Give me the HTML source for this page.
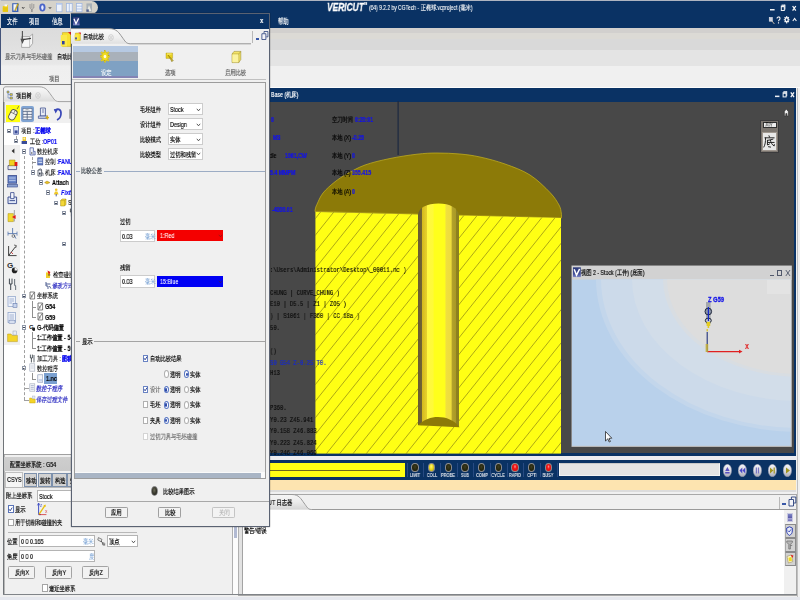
<!DOCTYPE html>
<html><head><meta charset="utf-8">
<style>
*{box-sizing:border-box;margin:0;padding:0}
html,body{width:800px;height:600px;overflow:hidden;background:#f0f0f0;font-family:"Liberation Sans",sans-serif;font-size:8px;color:#000}
.a{position:absolute}
.t{will-change:transform;-webkit-text-stroke:.18px currentColor;position:absolute;white-space:nowrap;line-height:7px;font-size:7px;transform:scaleX(.75);transform-origin:0 0}
.m{font-family:"Liberation Mono",monospace;font-size:7.4px;color:#0c0c0c}
.w{color:#fff}
.b{color:#1010f0;font-weight:bold}
.navy{background:#0a3264}
</style></head><body>
<!-- ===== top title + menu ===== -->
<div class="a navy" style="left:0;top:0;width:800px;height:27.6px"></div>
<div class="a" style="left:0;top:0;width:800px;height:1.2px;background:#aeb4c0"></div>
<div class="a" style="left:0;top:0;width:1.2px;height:28px;background:#c8ccd4"></div>
<div id="qat" class="a" style="left:0;top:1.2px;width:98px;height:12.6px;background:#d6d3cb;border-radius:0 7px 7px 0"></div>
<svg class="a" style="left:0;top:0" width="100" height="15" viewBox="0 0 100 15"><path d="M2.8 6 H5 L5.8 5 H8 V11.8 H2.8 Z" fill="#f0d020"/><path d="M2.8 7.4 H8 V11.8 H2.8 Z" fill="#e8c810"/><path d="M4.6 4.4 H7.2 V6.4 H4.6 Z" fill="#f8f8f0"/><rect x="12.2" y="3.2" width="6.2" height="8.8" fill="#3c64b8"/><rect x="13.4" y="4.2" width="3.6" height="6.4" fill="#f4f4f4"/><path d="M17.6 3.4 L18.6 4 L15.8 10.4 L14.8 10.8 L14.9 9.8 Z" fill="#e8c820" stroke="#604800" stroke-width=".3"/><path d="M22 7 L23.2 8.6 L24.4 7" fill="none" stroke="#303030" stroke-width=".8"/><path d="M30 4 V8 L31.6 9 V12 M33.8 4 V8 L32.2 9 V12 M31.9 3.4 V8" fill="none" stroke="#8a8a8a" stroke-width=".8"/><ellipse cx="42.4" cy="7.6" rx="3.1" ry="4" fill="#4a64c8"/><ellipse cx="42.4" cy="7.6" rx="1.2" ry="2.4" fill="#e8ecff"/><path d="M48.8 7 L50 8.6 L51.2 7" fill="none" stroke="#303030" stroke-width=".8"/><g fill="#eef3fc" stroke="#9ab2e0" stroke-width=".7"><rect x="56.4" y="3.4" width="5.6" height="8.4"/><rect x="66.4" y="3.4" width="5.8" height="8.4"/><rect x="76.4" y="3.4" width="5.6" height="8.4"/></g><path d="M69.3 3.4 V11.8 M76.4 6.2 H82 M76.4 9 H82" stroke="#9ab2e0" stroke-width=".7"/><rect x="56.4" y="3.4" width="5.6" height="1.4" fill="#b8ccf0"/><rect x="86.4" y="3.4" width="5.6" height="8.4" fill="#a8b0b8"/><path d="M87 11 L89 5 L91.4 11 Z" fill="#e8e8e0"/><rect x="86.4" y="9.4" width="2.4" height="2.4" fill="#506090"/></svg>
<div class="t w" style="left:6.9px;top:17.6px;font-size:7.8px;line-height:7.8px;transform:scaleX(.66)">文件</div>
<div class="t w" style="left:29.4px;top:17.6px;font-size:7.8px;line-height:7.8px;transform:scaleX(.66)">项目</div>
<div class="t w" style="left:52px;top:17.6px;font-size:7.8px;line-height:7.8px;transform:scaleX(.66)">信息</div>
<div class="t w" style="left:277.5px;top:17.6px;font-size:7.8px;line-height:7.8px;transform:scaleX(.66)">帮助</div>
<div class="t w" style="left:327px;top:2.2px;font-size:10.5px;line-height:10.5px;font-weight:bold;font-style:italic;transform:scaleX(.8);-webkit-text-stroke:.3px #fff">VERICUT</div>
<div class="t w" style="left:363.5px;top:2.6px;font-size:3px;line-height:3px">TM</div>
<div class="t w" style="left:369px;top:4.6px;font-size:6.6px;line-height:6.6px;-webkit-text-stroke:.1px #fff">(64) 9.2.2 by CGTech - 正椭球.vcproject (毫米)</div>
<svg class="a" style="left:764px;top:0" width="36" height="28" viewBox="0 0 36 28">
<rect x="6" y="9" width="4.6" height="1.5" fill="#eef0f4"/>
<rect x="17.6" y="4.6" width="3.4" height="1.2" fill="#eef0f4"/><rect x="16.8" y="5.6" width="4" height="5.4" fill="#eef0f4"/><rect x="17.8" y="7.2" width="2" height="2.8" fill="#0a3264"/><rect x="20.4" y="4.6" width="1" height="5" fill="#eef0f4"/>
<path d="M28.6 6 L31.8 10.6 M31.8 6 L28.6 10.6" stroke="#f4f4f6" stroke-width="1.3"/>
<rect x="5.2" y="17.4" width="3.2" height="3.8" fill="#d0d4e0" stroke="#f0f0f4" stroke-width=".5"/><path d="M8 21 L10.4 24" stroke="#d8c8b0" stroke-width=".9"/>
<path d="M13 18.6 C13 16.4 16 16.4 16 18.4 C16 19.8 14.5 19.8 14.5 21.2 M14.5 22.2 V23.4" fill="none" stroke="#f4f4f6" stroke-width="1.1"/>
<ellipse cx="22.7" cy="19.7" rx="2.1" ry="2.7" fill="#f4f4f6"/><path d="M22.7 16 V23.4 M19.8 19.7 H25.6 M20.6 17.2 L24.8 22.2 M24.8 17.2 L20.6 22.2" stroke="#f4f4f6" stroke-width="1.1"/><ellipse cx="22.7" cy="19.7" rx=".9" ry="1.2" fill="#0a3264"/>
<path d="M28.8 21 L30.6 18.4 L32.4 21" fill="none" stroke="#f4f4f6" stroke-width="1.1"/>
</svg>
<!-- ===== ribbon ===== -->
<div class="a" style="left:0;top:27.6px;width:800px;height:5.4px;background:#d2d0ce"></div>
<div class="a" style="left:0;top:33px;width:800px;height:5.8px;background:#dcdad5"></div>
<div class="a" style="left:0;top:38.8px;width:800px;height:11px;background:#d9d9d9"></div>
<div class="a" style="left:0;top:49.8px;width:800px;height:16.2px;background:#e4e4e4"></div>
<div class="a" style="left:0;top:66px;width:800px;height:22px;background:#f0f0f0"></div>
<div class="a" style="left:0;top:27.6px;width:75px;height:58.8px;background:linear-gradient(#dcdcdc 0,#dedede 18%,#e1e1e1 36%,#e6e6e6 50%,#e8e8e8 62%,#efefef 66%,#f0f0f0 100%)"></div><div class="a" style="left:1.4px;top:83.6px;width:70px;height:1px;background:#808080"></div>
<div class="a" style="left:0;top:27.6px;width:1.3px;height:57px;background:#44547a"></div><div class="a" style="left:238px;top:86.6px;width:562px;height:1px;background:#fcfcfc"></div>
<svg class="a" style="left:19px;top:30px" width="16" height="19" viewBox="0 0 16 19"><path d="M2.6 6.6 L10.6 6.6 L13.6 4 L13.6 13.4 L10.6 17.4 L2.6 17.4 Z" fill="#f6f6f6" stroke="#909090" stroke-width=".7"/><path d="M10.6 6.6 V17.4" stroke="#a0a0a0" stroke-width=".6"/><path d="M3.4 1 V9.4 M2.2 9.4 H4.8 L3.5 12.6 Z" stroke="#505050" stroke-width="1.1" fill="#606060"/><path d="M4 9.6 L12 8.4" stroke="#404040" stroke-width="1.3"/></svg>
<div class="t" style="left:5px;top:53px;color:#5c5c5c">显示刀具与毛坯碰撞</div>
<svg class="a" style="left:60px;top:31px" width="12" height="17" viewBox="0 0 12 17"><path d="M2.4 1.6 H9 L11 4 V15.4 H2.4 Z" fill="#f8e030" stroke="#c0a010" stroke-width=".5"/><path d="M.8 4 H7 V15.4 H.8 Z" fill="#fbe84a"/><path d="M8 1 L11.4 1 L11.4 4.4 Z" fill="#e02020"/><rect x="2" y="10" width="2.6" height="3.4" fill="#3040a0"/></svg>
<div class="t" style="left:56.6px;top:53px">自动比较</div>
<div class="t" style="left:49px;top:75px;color:#5c5c5c">项目</div>
<!-- ===== main view ===== -->
<div id="view" class="a navy" style="left:238px;top:88px;width:558px;height:367.6px;overflow:hidden">
  <div class="a" style="left:0;top:13.5px;width:556px;height:351.5px;background:#484848"></div>
</div>
<!--VIEWSVG--><svg class="a" style="left:0;top:0" width="800" height="600" viewBox="0 0 800 600">
<defs>
<clipPath id="cy"><path d="M315.5 212 L561 218 L561 453.5 L315.5 453.5 Z"/></clipPath>
<linearGradient id="hg" x1="0" x2="1" y1="0" y2="0">
<stop offset="0" stop-color="#6a5c30"/><stop offset="0.085" stop-color="#6e6034"/><stop offset="0.1" stop-color="#d4b81e"/><stop offset="0.21" stop-color="#e6d02c"/><stop offset="0.225" stop-color="#fff840"/><stop offset="0.37" stop-color="#fffa38"/><stop offset="0.39" stop-color="#ffff1c"/><stop offset="0.66" stop-color="#ffff1c"/><stop offset="0.68" stop-color="#f0e040"/><stop offset="0.81" stop-color="#eedc3c"/><stop offset="0.83" stop-color="#b2a22a"/><stop offset="0.92" stop-color="#aa9a26"/><stop offset="0.94" stop-color="#8c8020"/><stop offset="1" stop-color="#8c8020"/>
</linearGradient>
</defs>
<rect x="397.5" y="101" width="1.2" height="54" fill="#1c2840"/>
<path d="M315 211.5 C315.1 211.1 315.0 210.2 315.3 209 C315.6 207.8 315.7 206.9 317 204.25 C318.3 201.6 320.0 196.8 323 193 C326.0 189.2 331.0 184.9 335 181.75 C339.0 178.6 342.0 176.7 347 173.9 C352.0 171.1 357.8 167.6 365 165 C372.2 162.4 381.3 160.3 390 158.5 C398.7 156.7 409.2 155.1 417 154.2 C424.8 153.3 429.8 153.0 437 153 C444.2 153.0 452.8 153.3 460 154 C467.2 154.7 472.5 155.3 480 157 C487.5 158.7 496.7 161.0 505 164 C513.3 167.0 522.5 170.2 530 175 C537.5 179.8 545.2 187.5 550 192.5 C554.8 197.5 557.1 201.6 559 205 C560.9 208.4 560.9 210.8 561.3 213 C561.7 215.2 561.5 217.2 561.5 218 Z" fill="#8c7a08" stroke="#c8b41c" stroke-width="0.7"/>
<path d="M315.5 212 L561 218 L561 453.5 L315.5 453.5 Z" fill="#ffff14"/>
<g clip-path="url(#cy)" stroke="#6e6414" stroke-width="0.8" opacity="0.7"><line x1="300" y1="204.5" x2="580" y2="-145.5"/><line x1="300" y1="221.1" x2="580" y2="-128.9"/><line x1="300" y1="237.7" x2="580" y2="-112.3"/><line x1="300" y1="254.3" x2="580" y2="-95.7"/><line x1="300" y1="270.9" x2="580" y2="-79.1"/><line x1="300" y1="287.5" x2="580" y2="-62.5"/><line x1="300" y1="304.1" x2="580" y2="-45.9"/><line x1="300" y1="320.7" x2="580" y2="-29.3"/><line x1="300" y1="337.3" x2="580" y2="-12.7"/><line x1="300" y1="353.9" x2="580" y2="3.9"/><line x1="300" y1="370.5" x2="580" y2="20.5"/><line x1="300" y1="387.1" x2="580" y2="37.1"/><line x1="300" y1="403.7" x2="580" y2="53.7"/><line x1="300" y1="420.3" x2="580" y2="70.3"/><line x1="300" y1="436.9" x2="580" y2="86.9"/><line x1="300" y1="453.5" x2="580" y2="103.5"/><line x1="300" y1="470.1" x2="580" y2="120.1"/><line x1="300" y1="486.7" x2="580" y2="136.7"/><line x1="300" y1="503.3" x2="580" y2="153.3"/><line x1="300" y1="519.9" x2="580" y2="169.9"/><line x1="300" y1="536.5" x2="580" y2="186.5"/><line x1="300" y1="553.1" x2="580" y2="203.1"/><line x1="300" y1="569.7" x2="580" y2="219.7"/><line x1="300" y1="586.3" x2="580" y2="236.3"/><line x1="300" y1="602.9" x2="580" y2="252.9"/><line x1="300" y1="619.5" x2="580" y2="269.5"/><line x1="300" y1="636.1" x2="580" y2="286.1"/><line x1="300" y1="652.7" x2="580" y2="302.7"/><line x1="300" y1="669.3" x2="580" y2="319.3"/><line x1="300" y1="685.9" x2="580" y2="335.9"/><line x1="300" y1="702.5" x2="580" y2="352.5"/><line x1="300" y1="719.1" x2="580" y2="369.1"/><line x1="300" y1="735.7" x2="580" y2="385.7"/><line x1="300" y1="752.3" x2="580" y2="402.3"/><line x1="300" y1="768.9" x2="580" y2="418.9"/><line x1="300" y1="785.5" x2="580" y2="435.5"/><line x1="300" y1="802.1" x2="580" y2="452.1"/></g>
<path d="M418 425 L418 214.6 C418.5 208 427 203.6 438.5 203.6 C450 203.6 458 208 459 215.6 L459 427 Z" fill="url(#hg)"/>
<path d="M418 425.3 C424 419.5 431 417 438 417 C446 417 454 420 459.6 427.2 Z" fill="#8c7a08"/>

<!-- secondary window -->
<defs>
<clipPath id="w2"><rect x="572" y="279.6" width="218.6" height="166.2"/></clipPath>
</defs>
<rect x="571.5" y="265.5" width="220.3" height="181.4" fill="#c4c4c4"/>
<rect x="572" y="266" width="219.4" height="14" fill="#d2d2d2"/>
<rect x="572" y="279.6" width="218.6" height="166.2" fill="#b9d1eb"/>
<g clip-path="url(#w2)">
<ellipse cx="800" cy="279" rx="204" ry="153" fill="#c3d6eb"/>
<ellipse cx="800" cy="279" rx="199" ry="149" fill="#ccdaea"/>
<ellipse cx="800" cy="279" rx="168" ry="122" fill="#d2dde9"/>
<ellipse cx="800" cy="279" rx="137" ry="98" fill="#d8dde2"/>
<ellipse cx="800" cy="279" rx="133" ry="95" fill="#dddddd"/>
<rect x="767" y="280" width="23" height="14" fill="#e3e3e3"/>
</g>
<!-- axis -->
<line x1="707" y1="351.6" x2="740" y2="351.6" stroke="#e02020" stroke-width="1.1"/>
<path d="M739 349.8 L742.5 351.6 L739 353.4 Z" fill="#e02020"/>
<line x1="707.2" y1="332" x2="707.2" y2="352" stroke="#20307a" stroke-width="1.1"/>
<rect x="705.6" y="344" width="2.6" height="8" fill="#c8b030" opacity="0.8"/>
<rect x="706.6" y="329" width="1.2" height="2.4" fill="#d8c020"/>
<!-- tool -->
<rect x="706" y="302" width="4.6" height="22" fill="#a4a8ac"/>
<ellipse cx="708.3" cy="311.5" rx="3.3" ry="3.4" fill="#8a94a8" stroke="#20283c" stroke-width="1"/>
<ellipse cx="708.3" cy="320.5" rx="3" ry="2.4" fill="#c0c4c8" stroke="#20283c" stroke-width="1"/>
<line x1="708.4" y1="307" x2="708.4" y2="321" stroke="#1428c8" stroke-width="1.2"/>
<rect x="706.6" y="322" width="3.6" height="4" fill="#e4cc20"/>
<rect x="707.6" y="326" width="1.6" height="2" fill="#e4cc20"/>
<!-- cursor -->
<path d="M605.5 431.5 L605.5 441 L607.8 438.8 L609.2 442 L610.4 441.5 L609 438.4 L611.8 438.2 Z" fill="#fff" stroke="#101010" stroke-width="0.7"/>
</svg><!--/VIEWSVG-->
<!--VTXT--><!-- view overlay text -->
<div class="t w" style="left:271px;top:91.0px;">Base (机床)</div>
<div class="t b" style="left:271px;top:115.9px;">0</div>
<div class="t " style="left:332px;top:115.9px;">空刀时间</div>
<div class="t b" style="left:355px;top:115.9px;">0:20:01</div>
<div class="t b" style="left:272.5px;top:133.5px;">M3</div>
<div class="t " style="left:332px;top:133.5px;">本地 (X)</div>
<div class="t b" style="left:352px;top:133.5px;">-0.25</div>
<div class="t " style="left:259px;top:151.5px;">Spindle</div>
<div class="t b" style="left:284.7px;top:151.5px;">1061,CW</div>
<div class="t " style="left:332px;top:151.5px;">本地 (Y)</div>
<div class="t b" style="left:352px;top:151.5px;">0</div>
<div class="t b" style="left:270px;top:169.1px;">5.4 MMPM</div>
<div class="t " style="left:332px;top:169.1px;">本地 (Z)</div>
<div class="t b" style="left:352px;top:169.1px;">355.415</div>
<div class="t " style="left:332px;top:187.5px;">本地 (A)</div>
<div class="t b" style="left:352px;top:187.5px;">0</div>
<div class="t b" style="left:272px;top:205.5px;">-4000.01</div>
<div class="t m" style="left:260.2px;top:267.1px;">( C:\Users\Administrator\Desktop\_00011.nc )</div>
<div class="t m" style="left:270px;top:289.5px;">CHUNG | CURVE_CHUNG )</div>
<div class="t m" style="left:270px;top:301.1px;">E10 | D5.5 | Z1 | ZO5 )</div>
<div class="t m" style="left:270px;top:313.1px;">) | S1061 | F360 | CC 18a )</div>
<div class="t m" style="left:270px;top:324.5px;">50.</div>
<div class="t m" style="left:270px;top:347.5px;">()</div>
<div class="t m" style="left:270px;top:369.5px;"> H13</div>
<div class="t m" style="left:270px;top:404.5px;"> P360.</div>
<div class="t m" style="left:270px;top:416.5px;">Y0.23 Z45.941</div>
<div class="t m" style="left:270px;top:428.0px;">Y0.158 Z46.883</div>
<div class="t m" style="left:270px;top:439.5px;">Y0.223 Z45.824</div>
<div class="t m" style="left:270px;top:449.5px;">Y0.246 Z46.069</div>
<div class="t m" style="left:270px;top:359.5px;color:#1428d0">S0 G54 Z-0.25 T0.</div>
<svg class="a" style="left:770px;top:88px" width="26" height="13" viewBox="0 0 26 13">
<rect x="5" y="7.6" width="4.4" height="1.5" fill="#eef0f4"/>
<rect x="13.4" y="3.2" width="3.4" height="1.2" fill="#eef0f4"/><rect x="12.6" y="4.2" width="4" height="5.2" fill="#eef0f4"/><rect x="13.6" y="5.8" width="2" height="2.6" fill="#0a3264"/><rect x="16.2" y="3.2" width="1" height="5" fill="#eef0f4"/>
<path d="M20.8 4.4 L24 9.2 M24 4.4 L20.8 9.2" stroke="#f4f4f6" stroke-width="1.3"/>
</svg>
<svg class="a" style="left:783px;top:108px" width="7" height="9" viewBox="0 0 7 9"><path d="M3.3 1 L0.8 4.2 L1.4 4.2 L1.4 8 L2.8 8 L2.8 5.6 L3.9 5.6 L3.9 8 L5.3 8 L5.3 4.2 L5.9 4.2 Z" fill="#f0f0f0" stroke="#2a2a2a" stroke-width="0.6"/></svg>
<div class="a" style="left:760px;top:119.5px;width:19px;height:33.5px;background:#7c7670;border:1px solid #3a3a3c"></div>
<div class="a" style="left:762.5px;top:121.5px;width:14.5px;height:6.4px;background:#ececec;border:.6px solid #303030"></div>
<div class="t" style="left:765px;top:122.4px;font-size:5px;line-height:5px;-webkit-text-stroke:0">后方</div>
<div class="a" style="left:762px;top:131.5px;width:14.5px;height:19px;background:#e8e8e8;border:1px solid #a09890"></div>
<svg class="a" style="left:763.4px;top:133.6px" width="12" height="15" viewBox="0 0 14 15"><g fill="none" stroke="#242424" stroke-width="1.15" stroke-linecap="round"><path d="M7 .8 L7.6 2.4"/><path d="M2.2 3.2 H13"/><path d="M3 3.2 C3 8 2.6 11 1 14"/><path d="M11.6 4.8 C9.4 5.6 7.4 6 5.2 6.2"/><path d="M5.2 6.2 V11.6 L7.6 10.4"/><path d="M5.2 8.6 H13"/><path d="M8.6 5.8 C9 8.6 10.6 11.4 13 12.8 L13.2 11"/><path d="M6.4 13.6 L8.8 14"/></g></svg><svg class="a" style="left:572.8px;top:267.4px" width="7.8" height="10.4" viewBox="0 0 8 10"><defs><linearGradient id="vg572" x1="0" y1="0" x2="0" y2="1"><stop offset="0" stop-color="#2c3a78"/><stop offset=".7" stop-color="#44509a"/><stop offset="1" stop-color="#8088c8"/></linearGradient></defs><rect x="0" y="0" width="8" height="10" fill="url(#vg572)"/><path d="M1.2 2 L3.6 8 L6.8 1.6" fill="none" stroke="#fff" stroke-width="1.5"/></svg>
<div class="t" style="left:581.4px;top:269.4px;font-size:7px">视图 2 - Stock (工件) (底面)</div>
<div class="a" style="left:769.6px;top:275px;width:4px;height:1.2px;background:#50586c"></div>
<div class="a" style="left:777.4px;top:269.6px;width:5px;height:6px;border:.8px solid #50586c;border-top-width:1.4px"></div>
<svg class="a" style="left:785px;top:269px" width="6" height="8" viewBox="0 0 6 8"><path d="M.8 1 L5 7 M5 1 L.8 7" stroke="#50586c" stroke-width=".9"/></svg>
<div class="t" style="left:708.4px;top:296.4px;font-size:7.6px;line-height:7.6px;font-weight:bold;color:#1010e8;-webkit-text-stroke:.3px #1010e8">Z G59</div>
<div class="t" style="left:745px;top:342.6px;font-size:7.6px;line-height:7.6px;font-weight:bold;color:#e02020">X</div><!--/VTXT-->
<!-- ===== status bar ===== -->
<div class="a" style="left:238px;top:455.6px;width:558px;height:4.6px;background:#ececf0"></div>
<div class="a navy" style="left:238px;top:460px;width:557.6px;height:19.6px"></div>
<div class="a" style="left:238px;top:462.9px;width:167.4px;height:13.8px;background:#ffff14"></div>
<div class="a" style="left:238px;top:469.7px;width:162px;height:.8px;background:#6c6820"></div>
<div class="a" style="left:238px;top:479.6px;width:557.6px;height:10.6px;background:#fde4b0"></div>
<div class="a" style="left:238px;top:490.2px;width:557.6px;height:1.6px;background:#dcdcdc"></div>
<div class="a" style="left:406.7px;top:462.5px;width:.7px;height:14.5px;background:#274a82"></div>
<div class="a" style="left:411.2px;top:463px;width:7.6px;height:9.4px;border-radius:50%;background:radial-gradient(ellipse at 50% 40%,#3c3c20 0,#26260e 55%,#18180a 100%);border:1px solid #8e8e90"></div>
<div class="t" style="left:415.0px;top:473px;font-size:5.3px;line-height:5.3px;color:#dfe3ea;-webkit-text-stroke:.15px #dfe3ea;transform:translateX(-50%) scaleX(.75);transform-origin:50% 0">LIMIT</div>
<div class="a" style="left:423.3px;top:462.5px;width:.7px;height:14.5px;background:#274a82"></div>
<div class="a" style="left:427.8px;top:463px;width:7.6px;height:9.4px;border-radius:50%;background:radial-gradient(ellipse at 45% 35%,#fff870 0,#e8d820 45%,#b0a010 100%);border:1px solid #8e8e90"></div>
<div class="t" style="left:431.6px;top:473px;font-size:5.3px;line-height:5.3px;color:#dfe3ea;-webkit-text-stroke:.15px #dfe3ea;transform:translateX(-50%) scaleX(.75);transform-origin:50% 0">COLL</div>
<div class="a" style="left:440.1px;top:462.5px;width:.7px;height:14.5px;background:#274a82"></div>
<div class="a" style="left:444.6px;top:463px;width:7.6px;height:9.4px;border-radius:50%;background:radial-gradient(ellipse at 50% 40%,#3c3c20 0,#26260e 55%,#18180a 100%);border:1px solid #8e8e90"></div>
<div class="t" style="left:448.4px;top:473px;font-size:5.3px;line-height:5.3px;color:#dfe3ea;-webkit-text-stroke:.15px #dfe3ea;transform:translateX(-50%) scaleX(.75);transform-origin:50% 0">PROBE</div>
<div class="a" style="left:456.7px;top:462.5px;width:.7px;height:14.5px;background:#274a82"></div>
<div class="a" style="left:461.2px;top:463px;width:7.6px;height:9.4px;border-radius:50%;background:radial-gradient(ellipse at 50% 40%,#3c3c20 0,#26260e 55%,#18180a 100%);border:1px solid #8e8e90"></div>
<div class="t" style="left:465.0px;top:473px;font-size:5.3px;line-height:5.3px;color:#dfe3ea;-webkit-text-stroke:.15px #dfe3ea;transform:translateX(-50%) scaleX(.75);transform-origin:50% 0">SUB</div>
<div class="a" style="left:473.3px;top:462.5px;width:.7px;height:14.5px;background:#274a82"></div>
<div class="a" style="left:477.8px;top:463px;width:7.6px;height:9.4px;border-radius:50%;background:radial-gradient(ellipse at 50% 40%,#3c3c20 0,#26260e 55%,#18180a 100%);border:1px solid #8e8e90"></div>
<div class="t" style="left:481.6px;top:473px;font-size:5.3px;line-height:5.3px;color:#dfe3ea;-webkit-text-stroke:.15px #dfe3ea;transform:translateX(-50%) scaleX(.75);transform-origin:50% 0">COMP</div>
<div class="a" style="left:490.1px;top:462.5px;width:.7px;height:14.5px;background:#274a82"></div>
<div class="a" style="left:494.6px;top:463px;width:7.6px;height:9.4px;border-radius:50%;background:radial-gradient(ellipse at 50% 40%,#3c3c20 0,#26260e 55%,#18180a 100%);border:1px solid #8e8e90"></div>
<div class="t" style="left:498.4px;top:473px;font-size:5.3px;line-height:5.3px;color:#dfe3ea;-webkit-text-stroke:.15px #dfe3ea;transform:translateX(-50%) scaleX(.75);transform-origin:50% 0">CYCLE</div>
<div class="a" style="left:506.7px;top:462.5px;width:.7px;height:14.5px;background:#274a82"></div>
<div class="a" style="left:511.2px;top:463px;width:7.6px;height:9.4px;border-radius:50%;background:radial-gradient(ellipse at 50% 38%,#ff9090 0,#f01818 35%,#d00808 100%);border:1px solid #8e8e90"></div>
<div class="t" style="left:515.0px;top:473px;font-size:5.3px;line-height:5.3px;color:#dfe3ea;-webkit-text-stroke:.15px #dfe3ea;transform:translateX(-50%) scaleX(.75);transform-origin:50% 0">RAPID</div>
<div class="a" style="left:523.3px;top:462.5px;width:.7px;height:14.5px;background:#274a82"></div>
<div class="a" style="left:527.8px;top:463px;width:7.6px;height:9.4px;border-radius:50%;background:radial-gradient(ellipse at 50% 40%,#3c3c20 0,#26260e 55%,#18180a 100%);border:1px solid #8e8e90"></div>
<div class="t" style="left:531.6px;top:473px;font-size:5.3px;line-height:5.3px;color:#dfe3ea;-webkit-text-stroke:.15px #dfe3ea;transform:translateX(-50%) scaleX(.75);transform-origin:50% 0">OPTI</div>
<div class="a" style="left:540.1px;top:462.5px;width:.7px;height:14.5px;background:#274a82"></div>
<div class="a" style="left:544.6px;top:463px;width:7.6px;height:9.4px;border-radius:50%;background:radial-gradient(ellipse at 50% 38%,#ff9090 0,#f01818 35%,#d00808 100%);border:1px solid #8e8e90"></div>
<div class="t" style="left:548.4px;top:473px;font-size:5.3px;line-height:5.3px;color:#dfe3ea;-webkit-text-stroke:.15px #dfe3ea;transform:translateX(-50%) scaleX(.75);transform-origin:50% 0">BUSY</div>
<div class="a" style="left:556.5px;top:462.5px;width:.7px;height:14.5px;background:#274a82"></div>
<div class="a" style="left:558.8px;top:463px;width:161px;height:13.3px;background:#e4e4e4;border:1px solid #f4f4f4;border-top-color:#c8c8c8"></div>
<svg class="a" style="left:723.1px;top:463.5px" width="8.8" height="13" viewBox="0 0 8.8 13"><defs><linearGradient id="bgeject" x1="0" y1="0" x2="0" y2="1"><stop offset="0" stop-color="#f4f4f8"/><stop offset=".55" stop-color="#d8d8e0"/><stop offset="1" stop-color="#a8a8b4"/></linearGradient></defs><ellipse cx="4.4" cy="6.5" rx="4.2" ry="6.3" fill="url(#bgeject)" stroke="#8890a8" stroke-width=".5"/><path d="M4.4 3 L6.6 7 L2.2 7 Z M2.2 8 H6.6 V9.6 H2.2 Z" fill="#5a50c0"/></svg>
<svg class="a" style="left:738.1px;top:463.5px" width="8.8" height="13" viewBox="0 0 8.8 13"><defs><linearGradient id="bgrew" x1="0" y1="0" x2="0" y2="1"><stop offset="0" stop-color="#f4f4f8"/><stop offset=".55" stop-color="#d8d8e0"/><stop offset="1" stop-color="#a8a8b4"/></linearGradient></defs><ellipse cx="4.4" cy="6.5" rx="4.2" ry="6.3" fill="url(#bgrew)" stroke="#8890a8" stroke-width=".5"/><path d="M4.3 3.6 V9.4 L1.5 6.5 Z M7.3 3.6 V9.4 L4.5 6.5 Z" fill="#4a48c8"/></svg>
<svg class="a" style="left:753.1px;top:463.5px" width="8.8" height="13" viewBox="0 0 8.8 13"><defs><linearGradient id="bgpause" x1="0" y1="0" x2="0" y2="1"><stop offset="0" stop-color="#f4f4f8"/><stop offset=".55" stop-color="#d8d8e0"/><stop offset="1" stop-color="#a8a8b4"/></linearGradient></defs><ellipse cx="4.4" cy="6.5" rx="4.2" ry="6.3" fill="url(#bgpause)" stroke="#8890a8" stroke-width=".5"/><path d="M2.8 3.6 H4 V9.4 H2.8 Z M4.9 3.6 H6.1 V9.4 H4.9 Z" fill="#7a76c4"/></svg>
<svg class="a" style="left:768.1px;top:463.5px" width="8.8" height="13" viewBox="0 0 8.8 13"><defs><linearGradient id="bgstep" x1="0" y1="0" x2="0" y2="1"><stop offset="0" stop-color="#f4f4f8"/><stop offset=".55" stop-color="#d8d8e0"/><stop offset="1" stop-color="#a8a8b4"/></linearGradient></defs><ellipse cx="4.4" cy="6.5" rx="4.2" ry="6.3" fill="url(#bgstep)" stroke="#8890a8" stroke-width=".5"/><path d="M2 3.6 L5.4 6.5 L2 9.4 Z M5.6 3.6 H6.8 V9.4 H5.6 Z" fill="#a09420"/></svg>
<svg class="a" style="left:783.1px;top:463.5px" width="8.8" height="13" viewBox="0 0 8.8 13"><defs><linearGradient id="bgplay" x1="0" y1="0" x2="0" y2="1"><stop offset="0" stop-color="#f4f4f8"/><stop offset=".55" stop-color="#d8d8e0"/><stop offset="1" stop-color="#a8a8b4"/></linearGradient></defs><ellipse cx="4.4" cy="6.5" rx="4.2" ry="6.3" fill="url(#bgplay)" stroke="#8890a8" stroke-width=".5"/><path d="M3 3.4 L7 6.5 L3 9.6 Z" fill="#a09420"/></svg>
<!-- ===== log panel ===== -->
<div class="a" style="left:238px;top:494px;width:559px;height:102px;border:1px solid #a8a8a8;background:#f0f0f0"></div>
<div class="a" style="left:796.8px;top:88px;width:.9px;height:509px;background:#c0c0c0"></div>
<svg class="a" style="left:238px;top:493px" width="562" height="18" viewBox="0 0 562 18"><defs><linearGradient id="tg" x1="0" y1="0" x2="0" y2="1"><stop offset="0" stop-color="#f6f6f6"/><stop offset=".5" stop-color="#ececec"/><stop offset="1" stop-color="#d6d6d6"/></linearGradient></defs>
<path d="M0 16.5 L0 1.5 L54 1.5 C61 1.5 63 6 66 10 C69 14 70 16.5 73.4 16.5 Z" fill="url(#tg)"/>
<path d="M0 1.5 L54 1.5 C61 1.5 63 6 66 10 C69 14 70 16.5 73.4 16.5 L558 16.5" fill="none" stroke="#9a9a9a" stroke-width="1"/></svg>
<div class="t" style="left:251px;top:498.5px;font-size:7.4px">VERICUT 日志器</div>
<div class="a" style="left:243px;top:510px;width:541px;height:84.3px;background:#fff"></div>
<div class="a" style="left:241.6px;top:510px;width:1.4px;height:85px;background:#a4a4a4"></div>
<div class="t" style="left:244px;top:526.5px">警告/错误</div>
<div class="a" style="left:779px;top:496.5px;width:.8px;height:12px;background:#b8b8b8"></div>
<div class="a" style="left:782px;top:503.4px;width:4px;height:1.8px;background:#3a58a8"></div>
<svg class="a" style="left:788px;top:496px" width="9" height="11" viewBox="0 0 9 11"><path d="M1 3.5 H5.5 V10 H1 Z" fill="#f4f4f8" stroke="#28407c" stroke-width=".9"/><path d="M3.4 3 V1 H7.8 V7 H6" fill="none" stroke="#28407c" stroke-width=".9"/></svg>
<div class="a" style="left:784px;top:510px;width:12px;height:84.3px;background:#f0f0f0"></div>
<div class="a" style="left:787px;top:512.5px;width:6px;height:9.6px;background:linear-gradient(#8088c8,#5a5aa8 55%,#a8a8d8 60%,#7070b8);border:.5px solid #c8c8e0"></div>
<div class="a" style="left:784.6px;top:524.3px;width:11px;height:14px;background:#d2d2d2;border:1px solid #8a8a8a;border-left-color:#a8a8a8"></div>
<div class="a" style="left:784.6px;top:538.3px;width:11px;height:14px;background:#d2d2d2;border:1px solid #8a8a8a;border-left-color:#a8a8a8"></div>
<div class="a" style="left:784.6px;top:552.2px;width:11px;height:14px;background:#d2d2d2;border:1px solid #8a8a8a;border-left-color:#a8a8a8"></div>
<svg class="a" style="left:786.4px;top:526.4px" width="7" height="10" viewBox="0 0 7 10"><path d="M3.5 .8 L6.3 2 V5 C6.3 7.4 5 8.6 3.5 9.4 C2 8.6 .7 7.4 .7 5 V2 Z" fill="#e8ecf8" stroke="#3040b0" stroke-width="1"/><path d="M2 4.6 L3.2 6 L5 3.4" stroke="#3040b0" stroke-width=".8" fill="none"/></svg>
<svg class="a" style="left:786.4px;top:540.4px" width="7" height="10" viewBox="0 0 7 10"><path d="M.8 1 H6.4 V2.4 L4.4 4.4 V9 H2.8 V4.4 L.8 2.4 Z" fill="#b4b4b4" stroke="#6a6a6a" stroke-width=".7"/><path d="M4.4 5.4 H6.2" stroke="#6a6a6a" stroke-width=".8"/></svg>
<svg class="a" style="left:786px;top:554.2px" width="8" height="10" viewBox="0 0 8 10"><path d="M1 2.4 L5.4 1 L6.8 7.6 L2.4 9 Z" fill="#fff8d0" stroke="#908040" stroke-width=".5"/><path d="M2.4 3.8 L5.4 3 L6 6.8 L3 7.6 Z" fill="#f0d820"/><path d="M4.6 .8 L7.4 1.6 L6.6 4 Z" fill="#e02020"/></svg>
<!-- ===== left panel ===== -->
<div id="left" class="a" style="left:0;top:86px;width:238px;height:514px;background:#f0f0f0"></div>
<div class="a" style="left:2.6px;top:88px;width:1px;height:507px;background:#707478"></div><div class="a" style="left:4.2px;top:102px;width:.8px;height:492px;background:#b8b8b8"></div>
<svg class="a" style="left:3px;top:86px" width="240" height="17" viewBox="0 0 240 17"><defs><linearGradient id="tg2" x1="0" y1="0" x2="0" y2="1"><stop offset="0" stop-color="#f8f8f8"/><stop offset=".5" stop-color="#ececec"/><stop offset="1" stop-color="#dadada"/></linearGradient></defs>
<path d="M.5 16 L.5 3 C.5 1.5 1.5 .8 3 .8 L36 .8 C43 .8 45 5 48 9 C51 13 52 15.6 56 15.6 L.5 15.6Z" fill="url(#tg2)"/>
<path d="M.5 16 L.5 3 C.5 1.5 1.5 .8 3 .8 L36 .8 C43 .8 45 5 48 9 C51 13 52 15.6 56 15.6 L236 15.6" fill="none" stroke="#9a9a9a" stroke-width=".9"/></svg>
<svg class="a" style="left:6px;top:90px" width="8" height="10" viewBox="0 0 8 10"><path d="M1 1 H3 V3 H1Z M4 3.6 H6.4 V5.6 H4Z M4 7 H6.4 V9 H4Z" fill="#e8c820" stroke="#4060a8" stroke-width=".5"/><path d="M2 3 V8 H4 M2 4.6 H4" fill="none" stroke="#5070b0" stroke-width=".5"/></svg>
<div class="t" style="left:15.5px;top:91.6px;font-size:7.4px">项目树</div>
<svg class="a" style="left:34.8px;top:92.4px" width="6" height="7" viewBox="0 0 6 7"><ellipse cx="3" cy="3.5" rx="2.3" ry="2.9" fill="none" stroke="#c8c8c8" stroke-width=".8"/><path d="M1.8 2 L4.2 5 M4.2 2 L1.8 5" stroke="#c8c8c8" stroke-width=".7"/></svg>
<div class="a" style="left:5.6px;top:105px;width:14.6px;height:17.4px;background:#ffff10"></div>
<svg class="a" style="left:6px;top:105px" width="14" height="18" viewBox="0 0 14 18"><g transform="rotate(28 7 10)"><rect x="3.6" y="4.6" width="6.4" height="10.6" rx="3" fill="#f4f4e8" stroke="#505050" stroke-width=".9"/><path d="M3.6 8.4 H10 M6.8 4.6 V8.4" stroke="#505050" stroke-width=".6"/></g><path d="M11 4 C12.4 2.6 12 1.4 13 1" fill="none" stroke="#505050" stroke-width=".7"/></svg>
<div class="a" style="left:21px;top:106px;width:13px;height:15.6px;background:#7fa3d2;border-radius:2px"></div>
<svg class="a" style="left:22px;top:107px" width="11" height="14" viewBox="0 0 11 14"><rect x="1" y="1.6" width="9" height="10.8" fill="#f4f6fa" stroke="#5a6a8a" stroke-width=".6"/><path d="M1 4.6 H10 M1 7.4 H10 M1 10 H10 M5.2 4.6 V12.4" stroke="#4a5a7a" stroke-width=".8"/><path d="M2 3.6 L5 1.8 L8.6 3.6Z" fill="#b0b4b8"/></svg>
<svg class="a" style="left:37px;top:106px" width="13" height="16" viewBox="0 0 13 16"><path d="M3.4 2 H8.4 V10 H3.4Z" fill="#e8ecf4" stroke="#405090" stroke-width=".8"/><path d="M1.4 10 H10.4 V12.4 H1.4Z" fill="#c8d0e8" stroke="#405090" stroke-width=".7"/><path d="M5 4 H7 M5 6 H7" stroke="#405090" stroke-width=".7"/><path d="M8.6 11.6 H12 M10.4 9.6 V13.6" stroke="#d8b010" stroke-width="1.3"/></svg>
<svg class="a" style="left:53px;top:106px" width="10" height="16" viewBox="0 0 10 16"><path d="M2 5 C4 1.6 8.4 3 8 8 C7.8 11 6 13 4 14" fill="none" stroke="#3a48b8" stroke-width="1.7"/><path d="M.8 3 L5 3.4 L2.6 7.4Z" fill="#3a48b8"/></svg>
<div class="a" style="left:68.5px;top:109px;width:2px;height:10px;background:#b0b0b0;border-radius:2px"></div>
<div class="a" style="left:4px;top:123px;width:230px;height:331px;background:#fff"></div>
<div class="a" style="left:4px;top:145px;width:16.4px;height:200px;background:#f0f0f0"></div>
<div class="a" style="left:4px;top:453.6px;width:232px;height:.9px;background:#a0a0a0"></div>
<svg class="a" style="left:10.6px;top:148px" width="4" height="6" viewBox="0 0 4 6"><path d="M3.4 .6 V5.4 L.6 3Z" fill="#303030"/></svg>
<svg class="a" style="left:5.6px;top:156.5px" width="13" height="15" viewBox="0 0 13 15"><path d="M2 8.6 H10.6 V12.6 H2Z" fill="#e8e8f0" stroke="#404878" stroke-width=".8"/><path d="M3.4 3 H9 V8.6 H3.4Z" fill="#f0d020" stroke="#a08810" stroke-width=".5"/><path d="M8.6 5 H11.4 V9 H8.6Z" fill="#e01818"/></svg>
<svg class="a" style="left:5.6px;top:174px" width="13" height="15" viewBox="0 0 13 15"><rect x="2" y="1.6" width="8.6" height="7.6" fill="#6a86c8" stroke="#34468a" stroke-width=".8"/><path d="M3 4 H9.6 M3 6.4 H9.6" stroke="#c8d4f0" stroke-width=".8"/><rect x="1.4" y="10.4" width="10" height="2.6" fill="#8aa0d0" stroke="#34468a" stroke-width=".6"/></svg>
<svg class="a" style="left:5.6px;top:191px" width="13" height="15" viewBox="0 0 13 15"><path d="M2 6 H10.6 V12.6 H2Z" fill="#dfe6f6" stroke="#34468a" stroke-width=".9"/><path d="M4.6 1.6 H8 V7.6 H4.6Z" fill="#f4f6fc" stroke="#34468a" stroke-width=".8"/><path d="M3.6 9.6 H9" stroke="#34468a" stroke-width=".9"/></svg>
<svg class="a" style="left:5.6px;top:209px" width="13" height="15" viewBox="0 0 13 15"><path d="M2 4.6 H7.4 V12.6 H2Z" fill="#f2d830" stroke="#a89010" stroke-width=".5"/><path d="M8.4 1 V12.6" stroke="#b0b0b0" stroke-width="1.2"/><path d="M6 8 L9.6 6 L9.6 10Z" fill="#e01818"/></svg>
<svg class="a" style="left:5.6px;top:226px" width="13" height="15" viewBox="0 0 13 15"><path d="M2 7.6 H11 M6.6 2 V8 M8 9 L10 12.6" stroke="#5a7ab0" stroke-width=".9" fill="none"/><path d="M2 5.6 V9.6 M11 5.6 V9.6" stroke="#5a7ab0" stroke-width=".8"/><circle cx="7.4" cy="10" r="1.4" fill="none" stroke="#404040" stroke-width=".6"/></svg>
<svg class="a" style="left:5.6px;top:242.5px" width="13" height="15" viewBox="0 0 13 15"><path d="M2.6 12.6 V3 M2.6 12.6 H10.6 M2.6 12.6 L9.6 3.6" stroke="#303030" stroke-width=".9" fill="none"/><path d="M8 2 L10.4 2.6 L9.6 5" fill="none" stroke="#303030" stroke-width=".7"/><path d="M5 9 L7 11" stroke="#c02020" stroke-width=".8"/></svg>
<svg class="a" style="left:5.6px;top:259.5px" width="13" height="15" viewBox="0 0 13 15"><text x="1" y="8" font-family="Liberation Sans" font-weight="bold" font-size="8" fill="#303030">G</text><circle cx="8.6" cy="10.4" r="2.8" fill="#202020"/><path d="M8.6 10.4 L8.6 7.6 A2.8 2.8 0 0 1 11.4 10.4Z" fill="#f0f0f0"/></svg>
<svg class="a" style="left:5.6px;top:277px" width="13" height="15" viewBox="0 0 13 15"><path d="M3.4 1.6 V7 H6 V1.6 M4.7 7 V13" stroke="#404850" stroke-width="1" fill="none"/><path d="M8.6 2 V8 L9.6 9 V13" stroke="#707880" stroke-width="1.1" fill="none"/></svg>
<svg class="a" style="left:5.6px;top:294.5px" width="13" height="15" viewBox="0 0 13 15"><rect x="2" y="1.6" width="7.6" height="10" fill="#eef2fa" stroke="#8aa0c8" stroke-width=".7"/><path d="M3.4 4 H8 M3.4 6 H8 M3.4 8 H6" stroke="#7088b8" stroke-width=".6"/><rect x="7" y="8.4" width="4" height="4" fill="#c8d4ec" stroke="#5068a0" stroke-width=".5"/></svg>
<svg class="a" style="left:5.6px;top:311px" width="13" height="15" viewBox="0 0 13 15"><rect x="2" y="1.6" width="7.6" height="10" fill="#eef2fa" stroke="#8aa0c8" stroke-width=".7"/><path d="M3.4 4 H8 M3.4 6 H8 M3.4 8 H8" stroke="#7088b8" stroke-width=".6"/><rect x="3" y="9.6" width="6" height="2.6" fill="#d8e0f0" stroke="#5068a0" stroke-width=".4"/></svg>
<svg class="a" style="left:5.6px;top:329px" width="13" height="15" viewBox="0 0 13 15"><path d="M1.6 5 H5 L6 6.4 H11.4 V12.6 H1.6Z" fill="#f4d428" stroke="#b89810" stroke-width=".5"/><rect x="7" y="2" width="3.6" height="4" fill="#e8ecf4" stroke="#8090b0" stroke-width=".4"/></svg>
<div class="a" style="left:23.6px;top:156px;width:0;height:212px;border-left:.8px dashed #a0a0a0"></div>
<div class="a" style="left:16px;top:136px;width:0;height:6px;border-left:.8px dashed #a0a0a0"></div>
<div class="a" style="left:32px;top:157px;width:0;height:16px;border-left:.8px dashed #a0a0a0"></div>
<div class="a" style="left:32px;top:162px;width:4px;height:0;border-top:.8px solid #909090"></div>
<div class="a" style="left:7px;top:128.8px;width:4px;height:4.4px;border:.7px solid #9098a8;background:#fff"></div><div class="a" style="left:8px;top:130.7px;width:2px;height:.7px;background:#404858"></div>
<svg class="a" style="left:13px;top:126.0px" width="6.6" height="9" viewBox="0 0 6.6 9"><rect x=".8" y=".6" width="4.6" height="7.6" fill="#dfe6f8" stroke="#3a4c98" stroke-width=".7"/><rect x="1.6" y="4.4" width="3" height="3" fill="#3a4c98"/></svg>
<div class="t " style="left:21px;top:127.4px;font-size:7.2px;-webkit-text-stroke:.12px currentColor;">项目 :</div>
<div class="t b" style="left:35px;top:127.4px;font-size:7.2px;-webkit-text-stroke:.12px currentColor;">正椭球</div>
<div class="a" style="left:14px;top:139.1px;width:4px;height:4.4px;border:.7px solid #9098a8;background:#fff"></div><div class="a" style="left:15px;top:141.0px;width:2px;height:.7px;background:#404858"></div>
<svg class="a" style="left:21px;top:136.4px" width="6.6" height="9" viewBox="0 0 6.6 9"><path d="M.6 5 H6 V8 H.6Z" fill="#3a4c98"/><path d="M1.6 1 H5 V5 H1.6Z" fill="#f0c828"/><circle cx="3.3" cy="2.4" r="1" fill="#f8f0c0"/></svg>
<div class="t " style="left:30px;top:137.7px;font-size:7.2px;-webkit-text-stroke:.12px currentColor;">工位 :</div>
<div class="t b" style="left:43px;top:137.7px;font-size:7.2px;-webkit-text-stroke:.12px currentColor;">OP01</div>
<div class="a" style="left:22px;top:149.4px;width:4px;height:4.4px;border:.7px solid #9098a8;background:#fff"></div><div class="a" style="left:23px;top:151.3px;width:2px;height:.7px;background:#404858"></div>
<svg class="a" style="left:29px;top:146.8px" width="6.6" height="9" viewBox="0 0 6.6 9"><path d="M1 .8 H4.4 V8 H1Z" fill="#eef2fa" stroke="#3a4c98" stroke-width=".7"/><path d="M4.4 4.4 H6.2 V8 H4.4" fill="#c8d0e8" stroke="#3a4c98" stroke-width=".6"/><path d="M2 6 H3.4" stroke="#303030" stroke-width="1"/></svg>
<div class="t " style="left:37px;top:148.0px;font-size:7.2px;-webkit-text-stroke:.12px currentColor;">数控机床</div>
<svg class="a" style="left:37px;top:157.4px" width="6.6" height="9" viewBox="0 0 6.6 9"><rect x=".8" y=".8" width="5" height="7.2" fill="#6a86c8" stroke="#34468a" stroke-width=".6"/><path d="M1.4 3 H5.2 M1.4 5.4 H5.2" stroke="#e8ecf8" stroke-width=".9"/></svg>
<div class="t " style="left:45px;top:158.4px;font-size:7.2px;-webkit-text-stroke:.12px currentColor;">控制 :</div>
<div class="t b" style="left:58px;top:158.4px;font-size:7.2px;-webkit-text-stroke:.12px currentColor;">FANUC</div>
<div class="a" style="left:31px;top:170.2px;width:4px;height:4.4px;border:.7px solid #9098a8;background:#fff"></div><div class="a" style="left:32px;top:172.1px;width:2px;height:.7px;background:#404858"></div>
<svg class="a" style="left:37px;top:167.6px" width="6.6" height="9" viewBox="0 0 6.6 9"><path d="M1 2 H4.6 V8 H1Z" fill="#f4f6fa" stroke="#303848" stroke-width=".7"/><path d="M2 2 C2 .4 4.6 .4 4.6 2 M4.6 5 H6 V8" fill="none" stroke="#303848" stroke-width=".6"/><rect x="2" y="4.6" width="1.6" height="2" fill="#303848"/></svg>
<div class="t " style="left:45px;top:168.8px;font-size:7.2px;-webkit-text-stroke:.12px currentColor;">机床 :</div>
<div class="t b" style="left:58px;top:168.8px;font-size:7.2px;-webkit-text-stroke:.12px currentColor;">FANUC</div>
<div class="a" style="left:38.5px;top:180.4px;width:4px;height:4.4px;border:.7px solid #9098a8;background:#fff"></div><div class="a" style="left:39.5px;top:182.3px;width:2px;height:.7px;background:#404858"></div>
<svg class="a" style="left:44.4px;top:178.0px" width="6.6" height="9" viewBox="0 0 6.6 9"><path d="M.6 4.6 L3 3 L6 4.6 L3 6Z" fill="#e8c020" stroke="#907010" stroke-width=".4"/></svg>
<div class="t " style="left:52px;top:179.0px;font-size:7.2px;-webkit-text-stroke:.12px currentColor;font-weight:bold">Attach</div>
<div class="a" style="left:46px;top:190.4px;width:4px;height:4.4px;border:.7px solid #9098a8;background:#fff"></div><div class="a" style="left:47px;top:192.3px;width:2px;height:.7px;background:#404858"></div>
<svg class="a" style="left:52.6px;top:187.8px" width="6.6" height="9" viewBox="0 0 6.6 9"><circle cx="3.2" cy="1.8" r="1.3" fill="#f0c828"/><path d="M2 3.4 H4.4 L5.6 6.4 H.8Z" fill="#f0c828"/><path d="M3.2 6 V8.4" stroke="#3a4c98" stroke-width=".9"/></svg>
<div class="t b" style="left:60.6px;top:189.0px;font-size:7.2px;-webkit-text-stroke:.12px currentColor;font-style:italic">Fixture</div>
<div class="a" style="left:54.4px;top:200.6px;width:4px;height:4.4px;border:.7px solid #9098a8;background:#fff"></div><div class="a" style="left:55.4px;top:202.5px;width:2px;height:.7px;background:#404858"></div>
<svg class="a" style="left:60px;top:198.0px" width="6.6" height="9" viewBox="0 0 6.6 9"><path d="M.6 2.6 L2 1 H6 V6.4 L4.6 8 H.6Z" fill="#f4d838" stroke="#a08810" stroke-width=".5"/><path d="M.6 2.6 H4.6 V8 M4.6 2.6 L6 1" fill="none" stroke="#a08810" stroke-width=".4"/></svg>
<div class="t " style="left:68px;top:199.2px;font-size:7.2px;-webkit-text-stroke:.12px currentColor;">Stock</div>
<div class="a" style="left:62.4px;top:211.0px;width:4px;height:4.4px;border:.7px solid #9098a8;background:#fff"></div><div class="a" style="left:63.4px;top:212.9px;width:2px;height:.7px;background:#404858"></div>
<svg class="a" style="left:68.6px;top:208.4px" width="6.6" height="9" viewBox="0 0 6.6 9"><path d="M1.4 .6 V4 H3.4 V.6 M2.4 4 V8.4" stroke="#303840" stroke-width=".8" fill="none"/><path d="M5 1 V8.4" stroke="#606870" stroke-width="1"/></svg>
<div class="a" style="left:62.4px;top:241.6px;width:4px;height:4.4px;border:.7px solid #9098a8;background:#fff"></div><div class="a" style="left:63.4px;top:243.5px;width:2px;height:.7px;background:#404858"></div>
<svg class="a" style="left:45px;top:270.4px" width="6.6" height="9" viewBox="0 0 6.6 9"><path d="M1 2.4 H5 V8 H1Z" fill="#f0d028"/><path d="M2.4 .6 L5.4 2 L4 5Z" fill="#e01818"/><path d="M3 5 H5.4" stroke="#303030" stroke-width=".8"/></svg>
<div class="t " style="left:52.6px;top:271.4px;font-size:7.2px;-webkit-text-stroke:.12px currentColor;">检查碰撞</div>
<svg class="a" style="left:45px;top:281.0px" width="6.6" height="9" viewBox="0 0 6.6 9"><path d="M1 1 V5 H3 V8 M1 3 H5.4 M4.4 5 L6 7.6" stroke="#405088" stroke-width=".9" fill="none"/></svg>
<div class="t" style="left:53px;top:282.0px;font-size:7.2px;-webkit-text-stroke:.12px currentColor;transform:scaleX(.75) skewX(-12deg);color:#3434c4;-webkit-text-stroke:.25px #3434c4">修改方式</div>
<div class="a" style="left:22px;top:293.8px;width:4px;height:4.4px;border:.7px solid #9098a8;background:#fff"></div><div class="a" style="left:23px;top:295.7px;width:2px;height:.7px;background:#404858"></div>
<svg class="a" style="left:29px;top:291.2px" width="6.6" height="9" viewBox="0 0 6.6 9"><path d="M1 1 H5.6 V8 H1Z" fill="#fff" stroke="#303030" stroke-width=".6"/><path d="M1.6 7.4 L5 1.6 M1.6 4 L3.6 6" stroke="#303030" stroke-width=".6"/></svg>
<div class="t " style="left:37px;top:292.4px;font-size:7.2px;-webkit-text-stroke:.12px currentColor;">坐标系统</div>
<div class="a" style="left:32px;top:301px;width:0;height:16px;border-left:.8px solid #909090"></div><div class="a" style="left:32px;top:307px;width:4px;height:0;border-top:.8px solid #909090"></div><div class="a" style="left:32px;top:317px;width:4px;height:0;border-top:.8px solid #909090"></div>
<svg class="a" style="left:37px;top:302.2px" width="6.6" height="9" viewBox="0 0 6.6 9"><path d="M1 1 H5.6 V8 H1Z" fill="#fff" stroke="#303030" stroke-width=".6"/><path d="M1.6 7.4 L5 1.6 M1.6 4 L3.6 6" stroke="#303030" stroke-width=".6"/></svg>
<div class="t " style="left:45px;top:303.4px;font-size:7.2px;-webkit-text-stroke:.12px currentColor;font-weight:bold">G54</div>
<svg class="a" style="left:37px;top:312.4px" width="6.6" height="9" viewBox="0 0 6.6 9"><path d="M1 1 H5.6 V8 H1Z" fill="#fff" stroke="#303030" stroke-width=".6"/><path d="M1.6 7.4 L5 1.6 M1.6 4 L3.6 6" stroke="#303030" stroke-width=".6"/></svg>
<div class="t " style="left:45px;top:313.6px;font-size:7.2px;-webkit-text-stroke:.12px currentColor;font-weight:bold">G59</div>
<div class="a" style="left:22px;top:325.4px;width:4px;height:4.4px;border:.7px solid #9098a8;background:#fff"></div><div class="a" style="left:23px;top:327.3px;width:2px;height:.7px;background:#404858"></div>
<svg class="a" style="left:28.6px;top:322.8px" width="6.6" height="9" viewBox="0 0 6.6 9"><text x="0" y="5.6" font-family="Liberation Sans" font-weight="bold" font-size="6" fill="#202020">G</text><circle cx="4.8" cy="6.2" r="1.7" fill="#202020"/></svg>
<div class="t " style="left:37px;top:324.0px;font-size:7.2px;-webkit-text-stroke:.12px currentColor;-webkit-text-stroke:.3px #000">G-代码偏置</div>
<div class="a" style="left:32px;top:332px;width:0;height:16px;border-left:.8px solid #909090"></div><div class="a" style="left:32px;top:338px;width:4px;height:0;border-top:.8px solid #909090"></div><div class="a" style="left:32px;top:348px;width:4px;height:0;border-top:.8px solid #909090"></div>
<div class="t " style="left:37px;top:334.4px;font-size:7.2px;-webkit-text-stroke:.12px currentColor;-webkit-text-stroke:.3px #000">1:工作偏置 - 54</div>
<div class="t " style="left:37px;top:344.6px;font-size:7.2px;-webkit-text-stroke:.12px currentColor;-webkit-text-stroke:.3px #000">1:工作偏置 - 59</div>
<svg class="a" style="left:29px;top:354.0px" width="6.6" height="9" viewBox="0 0 6.6 9"><path d="M1.4 .6 V4 H3.4 V.6 M2.4 4 V8.4" stroke="#303840" stroke-width=".8" fill="none"/><path d="M5 1 V8.4" stroke="#606870" stroke-width="1"/></svg>
<div class="t " style="left:37px;top:355.2px;font-size:7.2px;-webkit-text-stroke:.12px currentColor;">加工刀具 :</div>
<div class="t b" style="left:62px;top:355.2px;font-size:7.2px;-webkit-text-stroke:.12px currentColor;">图稿</div>
<div class="a" style="left:22px;top:366.0px;width:4px;height:4.4px;border:.7px solid #9098a8;background:#fff"></div><div class="a" style="left:23px;top:367.9px;width:2px;height:.7px;background:#404858"></div>
<svg class="a" style="left:29px;top:363.4px" width="6.6" height="9" viewBox="0 0 6.6 9"><rect x=".8" y=".8" width="5" height="7.4" fill="#f4f6fa" stroke="#a0a8b8" stroke-width=".6"/><path d="M1.8 3 H4.8 M1.8 5 H4.8" stroke="#a8b0c0" stroke-width=".5"/></svg>
<div class="t " style="left:37px;top:364.6px;font-size:7.2px;-webkit-text-stroke:.12px currentColor;">数控程序</div>
<div class="a" style="left:32px;top:373px;width:0;height:6px;border-left:.8px solid #909090"></div><div class="a" style="left:32px;top:379px;width:4px;height:0;border-top:.8px solid #909090"></div>
<svg class="a" style="left:36.6px;top:374.0px" width="6.6" height="9" viewBox="0 0 6.6 9"><rect x=".8" y=".8" width="5" height="7.4" fill="#f4f6fa" stroke="#8090b0" stroke-width=".6"/><rect x="1.6" y="5" width="3.4" height="2.4" fill="#c8d4ec"/></svg>
<div class="a" style="left:44px;top:373.4px;width:13px;height:10.6px;background:#7aa0d0"></div>
<div class="t " style="left:45.6px;top:375.2px;font-size:7.2px;-webkit-text-stroke:.12px currentColor;font-weight:bold">1.nc</div>
<div class="a" style="left:23.6px;top:388px;width:5px;height:0;border-top:.8px dashed #a0a0a0"></div><div class="a" style="left:23.6px;top:368px;width:0;height:32px;border-left:.8px dashed #a0a0a0"></div><div class="a" style="left:23.6px;top:400px;width:5px;height:0;border-top:.8px dashed #a0a0a0"></div>
<svg class="a" style="left:29px;top:383.4px" width="6.6" height="9" viewBox="0 0 6.6 9"><rect x=".8" y=".8" width="5" height="7.4" fill="#f4f6fa" stroke="#a0a8b8" stroke-width=".6"/><path d="M1.8 2.6 H4.8 M1.8 4.4 H4.8 M1.8 6.2 H4.8" stroke="#7080a8" stroke-width=".5"/></svg>
<div class="t" style="left:37px;top:384.6px;font-size:7.2px;-webkit-text-stroke:.12px currentColor;transform:scaleX(.75) skewX(-12deg);color:#3434c4;-webkit-text-stroke:.25px #3434c4">数控子程序</div>
<svg class="a" style="left:29px;top:395.2px" width="6.6" height="9" viewBox="0 0 6.6 9"><path d="M.6 3 H2.6 L3.4 4 H6.2 V8 H.6Z" fill="#f4d428" stroke="#b89810" stroke-width=".4"/><rect x="3.6" y="1" width="2.4" height="2.6" fill="#e8ecf4" stroke="#8090b0" stroke-width=".3"/></svg>
<div class="t" style="left:37px;top:396.4px;font-size:7.2px;-webkit-text-stroke:.12px currentColor;transform:scaleX(.75) skewX(-12deg);color:#3434c4;-webkit-text-stroke:.25px #3434c4">保存过程文件</div>
<!-- ===== csys panel ===== -->
<div class="a" style="left:4px;top:457px;width:232px;height:14px;background:linear-gradient(#cecece,#c9c9c9)"></div>
<div class="t " style="left:10px;top:461.0px;font-size:7.2px;">配置坐标系统 : G54</div>
<div class="a" style="left:4px;top:487px;width:232px;height:.8px;background:#b8b8b8"></div>
<div class="a" style="left:5px;top:472px;width:18.4px;height:15.4px;background:#f5f5f5;border:.7px solid #c0c0c0;border-bottom:0"></div>
<div class="t " style="left:7.4px;top:476.4px;font-size:7.2px;">CSYS</div>
<div class="a" style="left:23.6px;top:473px;width:13.8px;height:14px;background:#d2d2d2;border:.9px solid #7c90ac"></div>
<div class="t " style="left:26.4px;top:476.6px;font-size:7.2px;">移动</div>
<div class="a" style="left:37.6px;top:473px;width:14.4px;height:14px;background:#d2d2d2;border:.9px solid #7c90ac"></div>
<div class="t " style="left:40.4px;top:476.6px;font-size:7.2px;">旋转</div>
<div class="a" style="left:52.2px;top:473px;width:15.0px;height:14px;background:#d2d2d2;border:.9px solid #7c90ac"></div>
<div class="t " style="left:55.0px;top:476.6px;font-size:7.2px;">构造</div>
<div class="a" style="left:67.39999999999999px;top:473px;width:14.4px;height:14px;background:#d2d2d2;border:.9px solid #7c90ac"></div>
<div class="t " style="left:70.2px;top:476.6px;font-size:7.2px;">矩阵</div>
<div class="t " style="left:6px;top:492.4px;font-size:7.2px;">附上坐标系</div>
<div class="a" style="left:37px;top:490px;width:120px;height:12.4px;background:#fff;border:.7px solid #b4b4b4"></div>
<div class="t " style="left:39px;top:492.6px;font-size:7.2px;">Stock</div>
<div class="a" style="left:8px;top:505.4px;width:5.6px;height:7.4px;background:#fff;border:.8px solid #5a74b8"></div>
<svg class="a" style="left:8px;top:505.8px" width="5.2" height="6.6" viewBox="0 0 5.2 6.6"><path d="M1 3.2 L2.2 4.8 L4.2 1.6" fill="none" stroke="#20388a" stroke-width=".9"/></svg>
<div class="t " style="left:15px;top:505.6px;font-size:7.2px;">显示</div>
<svg class="a" style="left:36px;top:502px" width="13" height="15" viewBox="0 0 13 15"><path d="M2.6 1.4 V12.6 H5" stroke="#3040c0" stroke-width=".9" fill="none"/><path d="M1.4 3.4 L2.6 1 L3.8 3.4" fill="none" stroke="#3040c0" stroke-width=".7"/><path d="M3 12.4 L9 3.4" stroke="#e8c010" stroke-width="1.3"/><path d="M7.4 3.6 L9.6 2.6 L9.6 5" fill="#e8c010"/><path d="M3 12.6 L10.4 12.6" stroke="#d03030" stroke-width=".8"/><text x="4" y="4.6" font-size="3.6" fill="#3040c0" font-family="Liberation Sans">Z</text><text x="9" y="11" font-size="3.6" fill="#d03030" font-family="Liberation Sans">X</text></svg>
<div class="a" style="left:8px;top:518.8px;width:5.6px;height:7.4px;background:#fff;border:.8px solid #a4a4a4"></div>
<div class="t " style="left:15px;top:519.1px;font-size:7.2px;">用于切削和碰撞的夹</div>
<div class="a" style="left:8px;top:531.6px;width:129px;height:.8px;background:#b8b8b8"></div>
<div class="t " style="left:7px;top:537.6px;font-size:7.2px;">位置</div>
<div class="a" style="left:19px;top:535px;width:75.6px;height:12.4px;background:#fff;border:.7px solid #b4b4b4"></div>
<div class="t " style="left:21px;top:537.8px;font-size:7.2px;">0 0 0.165</div>
<div class="t " style="left:83px;top:537.8px;font-size:7.2px;color:#6a98d0;-webkit-text-stroke:0">毫米</div>
<svg class="a" style="left:97px;top:536px" width="9" height="11" viewBox="0 0 9 11"><path d="M1.4 1.6 L5 3.4 L4 5.6 L.8 4Z" fill="#e8e8e8" stroke="#404040" stroke-width=".6"/><path d="M4 5 L7.6 9.4" stroke="#404040" stroke-width=".9"/><circle cx="6.6" cy="8" r="1.3" fill="none" stroke="#404040" stroke-width=".5"/></svg>
<div class="a" style="left:107px;top:535px;width:30.6px;height:12.4px;background:#fff;border:.7px solid #b4b4b4"></div>
<div class="t " style="left:109px;top:537.8px;font-size:7.2px;">顶点</div>
<svg class="a" style="left:130.6px;top:539.6px" width="5" height="4" viewBox="0 0 5 4"><path d="M.8 .8 L2.5 2.8 L4.2 .8" fill="none" stroke="#303030" stroke-width=".8"/></svg>
<div class="t " style="left:7px;top:552.6px;font-size:7.2px;">角度</div>
<div class="a" style="left:19px;top:550px;width:75.6px;height:12.4px;background:#fff;border:.7px solid #b4b4b4"></div>
<div class="t " style="left:21px;top:552.8px;font-size:7.2px;">0 0 0</div>
<div class="t " style="left:89px;top:552.8px;font-size:7.2px;color:#6a98d0;-webkit-text-stroke:0">度</div>
<div class="a" style="left:8px;top:566px;width:26.6px;height:13.4px;background:#f2f2f2;border:.8px solid #a4a4a4;border-radius:1.4px"></div>
<div class="t " style="left:14.6px;top:569.3px;font-size:7.2px;">反向X</div>
<div class="a" style="left:45px;top:566px;width:26.6px;height:13.4px;background:#f2f2f2;border:.8px solid #a4a4a4;border-radius:1.4px"></div>
<div class="t " style="left:51.6px;top:569.3px;font-size:7.2px;">反向Y</div>
<div class="a" style="left:82px;top:566px;width:26.6px;height:13.4px;background:#f2f2f2;border:.8px solid #a4a4a4;border-radius:1.4px"></div>
<div class="t " style="left:88.6px;top:569.3px;font-size:7.2px;">反向Z</div>
<div class="a" style="left:42px;top:584.2px;width:5.6px;height:7.6px;background:#fff;border:.8px solid #a4a4a4"></div>
<div class="t " style="left:49px;top:584.6px;font-size:7.2px;">邀近坐标系</div>
<div class="a" style="left:232.4px;top:510px;width:6.4px;height:84px;background:#fcfcfc;border-left:.8px solid #b0b0b0;border-right:.8px solid #b0b0b0"></div>
<div class="a" style="left:233.8px;top:526.8px;width:3.4px;height:11px;background:#b2bad2"></div>
<div class="a" style="left:239px;top:510px;width:2.6px;height:84px;background:#e2e2e2"></div>
<div class="a" style="left:3px;top:594.2px;width:794px;height:1.2px;background:#808488"></div>
<div class="a" style="left:0;top:597px;width:800px;height:3px;background:#e6e8ee"></div>
<!-- ===== dialog ===== -->
<div id="dlg" class="a" style="left:70.6px;top:13px;width:199.4px;height:513.8px;background:#f0f0f0;border:1px solid #5a6272;box-shadow:0 0 1.2px rgba(0,0,0,.45)"></div><div class="a" style="left:69.6px;top:14px;width:1.2px;height:14px;background:#b4b8c0"></div>
<div class="a navy" style="left:71.4px;top:13.6px;width:197.8px;height:15px"></div>
<svg class="a" style="left:73px;top:17.2px" width="6.6" height="8.4" viewBox="0 0 8 10"><defs><linearGradient id="vg73" x1="0" y1="0" x2="0" y2="1"><stop offset="0" stop-color="#2c3a78"/><stop offset=".7" stop-color="#44509a"/><stop offset="1" stop-color="#8088c8"/></linearGradient></defs><rect x="0" y="0" width="8" height="10" fill="url(#vg73)"/><path d="M1.2 2 L3.6 8 L6.8 1.6" fill="none" stroke="#fff" stroke-width="1.5"/></svg>
<div class="t w" style="left:259.6px;top:17.4px;font-size:7.8px;line-height:7.8px;font-weight:bold">x</div>
<svg class="a" style="left:71.4px;top:28.4px" width="198" height="17" viewBox="0 0 198 17"><defs><linearGradient id="tg3" x1="0" y1="0" x2="0" y2="1"><stop offset="0" stop-color="#fafafa"/><stop offset=".6" stop-color="#efefef"/><stop offset="1" stop-color="#e0e0e0"/></linearGradient></defs>
<path d="M0 15.8 L0 .6 L38 .6 C46 .6 48 5 51 9 C54 13 55 15.8 59.4 15.8Z" fill="url(#tg3)"/>
<path d="M0 .6 L38 .6 C46 .6 48 5 51 9 C54 13 55 15.8 59.4 15.8 L180 15.8" fill="none" stroke="#8a8a8a" stroke-width=".9"/></svg>
<svg class="a" style="left:73.6px;top:32px" width="7" height="9" viewBox="0 0 7 9"><path d="M1.4 1 H5 L6.4 2.4 V8.4 H1.4Z" fill="#f8e030" stroke="#b09810" stroke-width=".4"/><path d="M.6 2.6 H4.4 V8.4 H.6Z" fill="#fbe84a"/><path d="M4.4 .4 L6.8 .4 L6.8 2.6Z" fill="#e02020"/><rect x="1.2" y="5.4" width="1.6" height="2" fill="#3040a0"/></svg>
<div class="t " style="left:83.4px;top:33.0px;font-size:7.2px;">自动比较</div>
<svg class="a" style="left:107.8px;top:33.6px" width="6" height="7" viewBox="0 0 6 7"><ellipse cx="3" cy="3.5" rx="2.3" ry="2.9" fill="none" stroke="#c8c8c8" stroke-width=".8"/><path d="M1.8 2 L4.2 5 M4.2 2 L1.8 5" stroke="#c8c8c8" stroke-width=".7"/></svg>
<div class="a" style="left:252px;top:31px;width:.8px;height:12px;background:#b8b8b8"></div>
<div class="a" style="left:255.6px;top:38px;width:3.6px;height:1.8px;background:#3a58a8"></div>
<svg class="a" style="left:260.8px;top:30.4px" width="8" height="11" viewBox="0 0 9 11"><path d="M1 3.5 H5.5 V10 H1 Z" fill="#f4f4f8" stroke="#28407c" stroke-width=".9"/><path d="M3.4 3 V1 H7.8 V7 H6" fill="none" stroke="#28407c" stroke-width=".9"/></svg>
<div class="a" style="left:72.6px;top:46px;width:65px;height:31.6px;background:linear-gradient(#b6c9e2 0,#b6c9e2 19%,#a9b1ba 19%,#a9b1ba 47%,#7fa1c3 47%,#7fa1c3 95%,#8484b4 95%)"></div>
<svg class="a" style="left:100px;top:50px" width="10" height="13" viewBox="0 0 10 13"><g fill="#f0dc20" stroke="#b8a010" stroke-width=".3"><ellipse cx="5" cy="6.5" rx="3.4" ry="4.6"/><rect x="4.2" y=".6" width="1.6" height="2"/><rect x="4.2" y="10.4" width="1.6" height="2"/><rect x=".4" y="5.5" width="1.6" height="2"/><rect x="8" y="5.5" width="1.6" height="2"/><rect x="1.2" y="1.8" width="1.6" height="2" transform="rotate(-40 2 2.8)"/><rect x="7.2" y="1.8" width="1.6" height="2" transform="rotate(40 8 2.8)"/><rect x="1.2" y="9.2" width="1.6" height="2" transform="rotate(40 2 10.2)"/><rect x="7.2" y="9.2" width="1.6" height="2" transform="rotate(-40 8 10.2)"/></g><ellipse cx="5" cy="6.5" rx="1.3" ry="1.8" fill="#fffbe0"/></svg>
<div class="t w" style="left:101px;top:68.6px;font-size:7.2px;-webkit-text-stroke:.1px #fff">设定</div>
<svg class="a" style="left:164.6px;top:51px" width="10" height="12" viewBox="0 0 10 12"><path d="M1 2 H7.6 V7.4 H1Z" fill="#e8d020" stroke="#a89010" stroke-width=".4"/><path d="M3 4 L8.4 9.6 L6.6 9.8 L7.2 11 L5.6 8.6Z" fill="#c8b018" stroke="#806c08" stroke-width=".4"/><path d="M2 3 H6.6" stroke="#fff8a0" stroke-width=".8"/></svg>
<div class="t " style="left:165px;top:68.6px;font-size:7.2px;color:#5c5c5c">选项</div>
<svg class="a" style="left:230.6px;top:49.6px" width="11" height="14" viewBox="0 0 11 14"><path d="M1 4 L3 1.4 H9.8 V9.6 L7.8 12.6 H1Z" fill="#f4e468" stroke="#908020" stroke-width=".5"/><path d="M1 4 H7.8 V12.6 M7.8 4 L9.8 1.4" fill="none" stroke="#908020" stroke-width=".5"/><path d="M1.4 4.4 H7.4 V12.2 H1.4Z" fill="#fbf3a0"/></svg>
<div class="t " style="left:225px;top:68.6px;font-size:7.2px;color:#5c5c5c">启用比较</div>
<div class="a" style="left:72px;top:79.4px;width:194px;height:.8px;background:#c0c0c0"></div>
<div class="a" style="left:74px;top:81.6px;width:191.8px;height:397.4px;border:.9px solid #9c9c9c;background:#f0f0f0"></div>
<div class="t " style="right:638.6px;top:105.9px;font-size:7.2px;transform-origin:100% 0;">毛坯组件</div>
<div class="a" style="left:168.2px;top:103.3px;width:34.4px;height:12.2px;background:#fff;border:.7px solid #cccccc"></div>
<div class="t " style="left:169.6px;top:106.1px;font-size:7.2px;">Stock</div>
<svg class="a" style="left:196px;top:107.7px" width="5" height="4" viewBox="0 0 5 4"><path d="M.8 .8 L2.5 2.8 L4.2 .8" fill="none" stroke="#303030" stroke-width=".8"/></svg>
<div class="t " style="right:638.6px;top:120.8px;font-size:7.2px;transform-origin:100% 0;">设计组件</div>
<div class="a" style="left:168.2px;top:118.2px;width:34.4px;height:12.2px;background:#fff;border:.7px solid #cccccc"></div>
<div class="t " style="left:169.6px;top:121.0px;font-size:7.2px;">Design</div>
<svg class="a" style="left:196px;top:122.6px" width="5" height="4" viewBox="0 0 5 4"><path d="M.8 .8 L2.5 2.8 L4.2 .8" fill="none" stroke="#303030" stroke-width=".8"/></svg>
<div class="t " style="right:638.6px;top:135.7px;font-size:7.2px;transform-origin:100% 0;">比较模式</div>
<div class="a" style="left:168.2px;top:133.1px;width:34.4px;height:12.2px;background:#fff;border:.7px solid #cccccc"></div>
<div class="t " style="left:169.6px;top:135.9px;font-size:7.2px;">实体</div>
<svg class="a" style="left:196px;top:137.5px" width="5" height="4" viewBox="0 0 5 4"><path d="M.8 .8 L2.5 2.8 L4.2 .8" fill="none" stroke="#303030" stroke-width=".8"/></svg>
<div class="t " style="right:638.6px;top:150.6px;font-size:7.2px;transform-origin:100% 0;">比较类型</div>
<div class="a" style="left:168.2px;top:148.0px;width:34.4px;height:12.2px;background:#fff;border:.7px solid #cccccc"></div>
<div class="t " style="left:169.6px;top:150.8px;font-size:7.2px;">过切和残留</div>
<svg class="a" style="left:196px;top:152.4px" width="5" height="4" viewBox="0 0 5 4"><path d="M.8 .8 L2.5 2.8 L4.2 .8" fill="none" stroke="#303030" stroke-width=".8"/></svg>
<div class="a" style="left:76px;top:170.6px;width:4px;height:.8px;background:#9cacc4"></div>
<div class="a" style="left:104px;top:170.6px;width:161px;height:.8px;background:#9cacc4"></div>
<div class="t " style="left:81px;top:167.2px;font-size:7.2px;color:#303840">比较公差</div>
<div class="t " style="left:119.8px;top:218.4px;font-size:7.2px;">过切</div>
<div class="a" style="left:120.4px;top:229.8px;width:34.4px;height:12.4px;background:#fff;border:.7px solid #cccccc"></div>
<div class="t " style="left:122px;top:232.6px;font-size:7.2px;">0.03</div>
<div class="t " style="left:145px;top:232.6px;font-size:7.2px;color:#6a98d0;-webkit-text-stroke:0">毫米</div>
<div class="a" style="left:157px;top:230.4px;width:66px;height:10.8px;background:#f40000"></div>
<div class="t w" style="left:160px;top:232.4px;font-size:7.2px;-webkit-text-stroke:.1px #fff">1:Red</div>
<svg class="a" style="left:217.6px;top:234.2px" width="5" height="4" viewBox="0 0 5 4"><path d="M.8 .8 L2.5 2.8 L4.2 .8" fill="none" stroke="#502020" stroke-width=".7" opacity=".7"/></svg>
<div class="t " style="left:119.8px;top:263.8px;font-size:7.2px;">残留</div>
<div class="a" style="left:120.4px;top:275.2px;width:34.4px;height:12.4px;background:#fff;border:.7px solid #cccccc"></div>
<div class="t " style="left:122px;top:278.0px;font-size:7.2px;">0.03</div>
<div class="t " style="left:145px;top:278.0px;font-size:7.2px;color:#6a98d0;-webkit-text-stroke:0">毫米</div>
<div class="a" style="left:157px;top:275.8px;width:66px;height:10.8px;background:#0000f4"></div>
<div class="t w" style="left:160px;top:277.8px;font-size:7.2px;-webkit-text-stroke:.1px #fff">15:Blue</div>
<svg class="a" style="left:217.6px;top:279.6px" width="5" height="4" viewBox="0 0 5 4"><path d="M.8 .8 L2.5 2.8 L4.2 .8" fill="none" stroke="#502020" stroke-width=".7" opacity=".7"/></svg>
<div class="a" style="left:76px;top:340.8px;width:4px;height:.8px;background:#a4a4a4"></div>
<div class="a" style="left:94px;top:340.8px;width:171px;height:.8px;background:#a4a4a4"></div>
<div class="t " style="left:81.6px;top:337.6px;font-size:7.2px;">显示</div>
<div class="a" style="left:143px;top:354.9px;width:5.2px;height:7.4px;background:#fff;border:.8px solid #6a84c4"></div>
<svg class="a" style="left:143px;top:355.3px" width="5" height="6.6" viewBox="0 0 5 6.6"><path d="M1 3.2 L2.1 4.8 L4.1 1.6" fill="none" stroke="#20388a" stroke-width=".9"/></svg>
<div class="t " style="left:149.6px;top:355.3px;font-size:7.2px;">自动比较结果</div>
<div class="a" style="left:163.5px;top:370.4px;width:5.4px;height:7.6px;border-radius:50%;background:#fff;border:.8px solid #b0b0b0"></div>
<div class="t " style="left:169.6px;top:370.8px;font-size:7.2px;">透明</div>
<div class="a" style="left:184px;top:370.4px;width:5.4px;height:7.6px;border-radius:50%;background:#fff;border:.8px solid #5a78c4"></div>
<div class="a" style="left:185.5px;top:372.7px;width:2.4px;height:3.4px;border-radius:50%;background:#2a48a8"></div>
<div class="t " style="left:190.2px;top:370.8px;font-size:7.2px;">实体</div>
<div class="a" style="left:143px;top:385.9px;width:5.2px;height:7.4px;background:#fff;border:.8px solid #6a84c4"></div>
<svg class="a" style="left:143px;top:386.3px" width="5" height="6.6" viewBox="0 0 5 6.6"><path d="M1 3.2 L2.1 4.8 L4.1 1.6" fill="none" stroke="#20388a" stroke-width=".9"/></svg>
<div class="t " style="left:149.6px;top:386.3px;font-size:7.2px;color:#6c6c6c">设计</div>
<div class="a" style="left:163.5px;top:385.9px;width:5.4px;height:7.6px;border-radius:50%;background:#fff;border:.8px solid #5a78c4"></div>
<div class="a" style="left:165.0px;top:388.2px;width:2.4px;height:3.4px;border-radius:50%;background:#2a48a8"></div>
<div class="t " style="left:169.6px;top:386.3px;font-size:7.2px;">透明</div>
<div class="a" style="left:184px;top:385.9px;width:5.4px;height:7.6px;border-radius:50%;background:#fff;border:.8px solid #b0b0b0"></div>
<div class="t " style="left:190.2px;top:386.3px;font-size:7.2px;">实体</div>
<div class="a" style="left:143px;top:401.0px;width:5.2px;height:7.4px;background:#fff;border:.8px solid #b0b0b0"></div>
<div class="t " style="left:149.6px;top:401.4px;font-size:7.2px;">毛坯</div>
<div class="a" style="left:163.5px;top:401.0px;width:5.4px;height:7.6px;border-radius:50%;background:#fff;border:.8px solid #5a78c4"></div>
<div class="a" style="left:165.0px;top:403.3px;width:2.4px;height:3.4px;border-radius:50%;background:#2a48a8"></div>
<div class="t " style="left:169.6px;top:401.4px;font-size:7.2px;">透明</div>
<div class="a" style="left:184px;top:401.0px;width:5.4px;height:7.6px;border-radius:50%;background:#fff;border:.8px solid #b0b0b0"></div>
<div class="t " style="left:190.2px;top:401.4px;font-size:7.2px;">实体</div>
<div class="a" style="left:143px;top:416.8px;width:5.2px;height:7.4px;background:#fff;border:.8px solid #b0b0b0"></div>
<div class="t " style="left:149.6px;top:417.2px;font-size:7.2px;">夹具</div>
<div class="a" style="left:163.5px;top:416.8px;width:5.4px;height:7.6px;border-radius:50%;background:#fff;border:.8px solid #5a78c4"></div>
<div class="a" style="left:165.0px;top:419.1px;width:2.4px;height:3.4px;border-radius:50%;background:#2a48a8"></div>
<div class="t " style="left:169.6px;top:417.2px;font-size:7.2px;">透明</div>
<div class="a" style="left:184px;top:416.8px;width:5.4px;height:7.6px;border-radius:50%;background:#fff;border:.8px solid #b0b0b0"></div>
<div class="t " style="left:190.2px;top:417.2px;font-size:7.2px;">实体</div>
<div class="a" style="left:143px;top:432.8px;width:5.2px;height:7.4px;background:#fff;border:.8px solid #d4d4d4"></div>
<div class="t " style="left:149.6px;top:433.2px;font-size:7.2px;color:#6c6c6c">过切刀具与毛坯碰撞</div>
<div class="a" style="left:74.8px;top:472.4px;width:190.2px;height:6px;background:#fafafa"></div>
<div class="a" style="left:74.8px;top:472.6px;width:186.4px;height:5.4px;background:#a9b5c5"></div>
<div class="a" style="left:150.6px;top:485.6px;width:7.8px;height:10.8px;border-radius:50%;background:radial-gradient(ellipse at 45% 40%,#6a6a58 0,#34342a 55%,#1c1c18 100%);border:.8px solid #8a8a8a"></div>
<div class="t " style="left:162.6px;top:487.6px;font-size:7.2px;">比较结果图示</div>
<div class="a" style="left:72px;top:501px;width:197px;height:.8px;background:#a8a8a8"></div>
<div class="a" style="left:104.6px;top:507px;width:23px;height:11.4px;background:#f3f3f3;border:.8px solid #a0a0a0;border-radius:1.2px"></div>
<div class="t " style="left:111.19999999999999px;top:509.2px;font-size:7.2px;">应用</div>
<div class="a" style="left:158.4px;top:507px;width:23px;height:11.4px;background:#f3f3f3;border:.8px solid #a0a0a0;border-radius:1.2px"></div>
<div class="t " style="left:165.0px;top:509.2px;font-size:7.2px;">比较</div>
<div class="a" style="left:212.2px;top:507px;width:23px;height:11.4px;background:#f3f3f3;border:.8px solid #c4c4c4;border-radius:1.2px"></div>
<div class="t " style="left:218.79999999999998px;top:509.2px;font-size:7.2px;color:#a8a8a8;-webkit-text-stroke:0">关闭</div>
</body></html>
